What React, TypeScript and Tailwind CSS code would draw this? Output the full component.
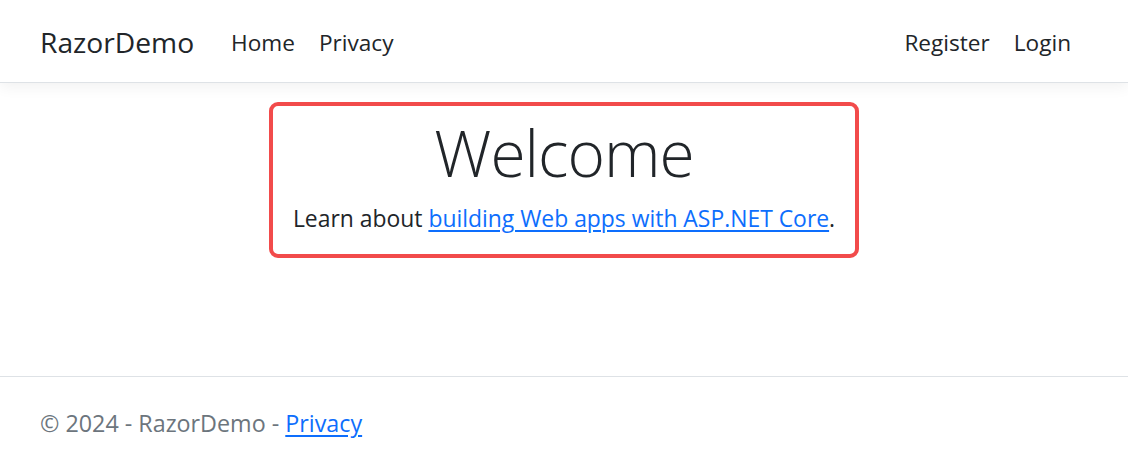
export default function App() {
    return (
        <div
            className="min-h-screen bg-white text-[#212529] flex flex-col"
            style={{ fontFamily: '"Segoe UI", "Open Sans", "Noto Sans", sans-serif' }}
        >
            {/* Navbar */}
            <header className="h-[83px] shrink-0 border-b border-[#dee2e6] bg-white shadow-[0_4px_14px_rgba(0,0,0,0.06)] relative z-10">
                <nav className="h-full flex items-center pt-[3px] pl-[40px] pr-[57px]">
                    <a href="#" className="text-[28.2px] text-[#212529] mr-[37px]">
                        RazorDemo
                    </a>
                    <div className="flex items-center gap-[24px] text-[22.6px]">
                        <a href="#" className="text-[#212529]">Home</a>
                        <a href="#" className="text-[#212529]">Privacy</a>
                    </div>
                    <div className="ml-auto flex items-center gap-[24px] text-[22.6px]">
                        <a href="#" className="text-[#212529]">Register</a>
                        <a href="#" className="text-[#212529]">Login</a>
                    </div>
                </nav>
            </header>

            {/* Main */}
            <main className="h-[293px] shrink-0 flex justify-center pt-[19px]">
                <div className="self-start border-4 border-[#f24b4b] rounded-[9px] px-[20px] pt-[7px] pb-[18px] text-center">
                    <h1 className="text-[64px] font-light leading-[80px] tracking-[-1px] mb-[9px]">Welcome</h1>
                    <p className="text-[22.9px] leading-[34px]">
                        Learn about{' '}
                        <a href="#" className="text-[#0d6efd] underline underline-offset-[3px]">
                            building Web apps with ASP.NET Core
                        </a>
                        .
                    </p>
                </div>
            </main>

            {/* Footer */}
            <footer className="flex-1 border-t border-[#dee2e6] pl-[40px] pt-[29px] text-[23.3px] text-[#6c757d]">
                © 2024 - RazorDemo -{' '}
                <a href="#" className="text-[#0d6efd] underline underline-offset-[3px]">
                    Privacy
                </a>
            </footer>
        </div>
    )
}
